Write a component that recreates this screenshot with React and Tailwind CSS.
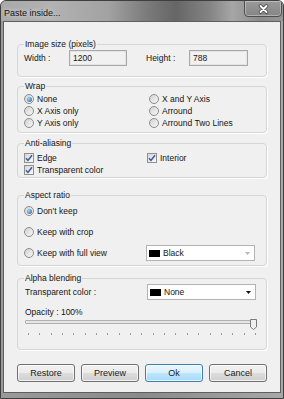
import React from "react";

const font = "font-['Liberation_Sans',Arial,sans-serif]";

function Radio({ label, checked }) {
  return (
    <div className="flex items-center h-[12px]">
      <span className="w-[10px] h-[10px] rounded-full border border-[#8d8d8d] bg-[linear-gradient(135deg,#d2d2d2,#f7f7f7)] flex items-center justify-center shrink-0">
        {checked && (
          <span className="w-[5px] h-[5px] rounded-full bg-[radial-gradient(circle_at_35%_35%,#9fd3f7,#1e5d98)]"></span>
        )}
      </span>
      <span className="ml-[3px] whitespace-nowrap">{label}</span>
    </div>
  );
}

function Check({ label, checked }) {
  return (
    <div className="flex items-center h-[12px]">
      <span className="w-[10px] h-[10px] border border-[#8e8f8f] bg-[linear-gradient(135deg,#d6d6d6,#fafafa)] flex items-center justify-center shrink-0">
        {checked && (
          <svg width="8" height="8" viewBox="0 0 8 8">
            <path d="M1 4.2 L3 6.4 L7 1.2" fill="none" stroke="#3d5a9a" strokeWidth="1.5" />
          </svg>
        )}
      </span>
      <span className="ml-[3px] whitespace-nowrap">{label}</span>
    </div>
  );
}

function Group({ title, className, children }) {
  return (
    <fieldset className={`border border-[#d6d6d6] rounded-[4px] pl-[6px] pr-[6px] shadow-[1px_1px_0_#fff] ${className}`}>
      <legend className="px-[1px] leading-[12px]">{title}</legend>
      {children}
    </fieldset>
  );
}

function Combo({ label, arrow }) {
  return (
    <div className="w-[109px] h-[16px] border border-[#b3b3b3] bg-white flex items-center pl-[2px] pr-[4px]">
      <span className="w-[11px] h-[7px] bg-black"></span>
      <span className="ml-[3px] flex-1">{label}</span>
      <svg width="5" height="3" viewBox="0 0 5 3">
        <path d="M0 0 H5 L2.5 3 Z" fill={arrow} />
      </svg>
    </div>
  );
}

function Field({ value, width }) {
  return (
    <div className={`${width} h-[16px] border border-[#a8a8a8] bg-[#f1f1f1] shadow-[inset_0_0_0_1px_#e4e4e4] flex items-center pl-[3px]`}>
      {value}
    </div>
  );
}

function Btn({ label, primary }) {
  return (
    <button
      className={`w-[58px] h-[18px] rounded-[3px] border text-[9px] leading-none text-[#1a1a1a] shadow-[inset_0_0_0_1px_rgba(255,255,255,0.7)] ${
        primary
          ? "border-[#3c7fb1] bg-[linear-gradient(#eaf6fd_0%,#d9f0fc_50%,#bee6fd_51%,#a7d9f5_100%)]"
          : "border-[#707070] bg-[linear-gradient(#f2f2f2_0%,#ebebeb_50%,#dddddd_51%,#cfcfcf_100%)]"
      }`}
    >
      {label}
    </button>
  );
}

export default function App() {
  const ticks = Array.from({ length: 21 });
  return (
    <div className={`${font} w-[284px] h-[399px] flex flex-col border border-[#3f3f3f] rounded-t-[6px] bg-[#8c8c8c] text-[8.5px] text-[#141414] overflow-hidden`}>
      {/* title bar */}
      <div className="h-[20px] flex items-start justify-between bg-[linear-gradient(90deg,#a9a9a9_0%,#b2b2b2_18%,#a2a2a2_38%,#7a7a7a_52%,#666666_62%,#848484_74%,#a6a6a6_82%,#8a8a8a_92%,#959595_100%)]">
        <span className="mt-[6px] ml-[3px] text-[9px] leading-[12px] text-[#111] [text-shadow:0_0_5px_rgba(255,255,255,0.9)]">
          Paste inside...
        </span>
        <div className="w-[38px] h-[17px] -mt-px mr-px border border-[#4e4e4e] rounded-b-[4px] shadow-[inset_0_0_0_1px_rgba(255,255,255,0.35)] bg-[linear-gradient(#9a9a9a,#858585)] flex items-center justify-center">
          <svg width="11" height="10" viewBox="0 0 11 10">
            <path d="M2.5 2 L8.5 8 M8.5 2 L2.5 8" stroke="#3a3a3a" strokeWidth="3.4" strokeLinecap="round" />
            <path d="M2.5 2 L8.5 8 M8.5 2 L2.5 8" stroke="#ffffff" strokeWidth="2" strokeLinecap="round" />
          </svg>
        </div>
      </div>

      {/* frame + client */}
      <div className="flex-1 flex px-[2px] pb-[5px] bg-[linear-gradient(90deg,#9a9a9a,#8a8a8a_50%,#a8a8a8)]">
        <div className="flex-1 flex flex-col border border-[#5f5f5f] bg-[#f0f0f0] px-[13px] pt-[16px]">
          <Group title="Image size (pixels)" className="pb-[10px]">
            <div className="flex items-center h-[16px]">
              <span className="w-[45px]">Width :</span>
              <Field value="1200" width="w-[58px]" />
              <span className="ml-[19px] w-[43px]">Height :</span>
              <Field value="788" width="w-[59px]" />
            </div>
          </Group>

          <Group title="Wrap" className="mt-[3px] pt-[1px] pb-[3px]">
            <div className="grid grid-cols-[125px_1fr]">
              <Radio label="None" checked />
              <Radio label="X and Y Axis" />
              <Radio label="X Axis only" />
              <Radio label="Arround" />
              <Radio label="Y Axis only" />
              <Radio label="Arround Two Lines" />
            </div>
          </Group>

          <Group title="Anti-aliasing" className="mt-[4px] pt-[3px] pb-[1px]">
            <div className="grid grid-cols-[123px_1fr]">
              <Check label="Edge" checked />
              <Check label="Interior" checked />
              <Check label="Transparent color" checked />
            </div>
          </Group>

          <Group title="Aspect ratio" className="mt-[11px] pt-[2px] pb-[4px]">
            <div className="flex flex-col gap-[5px]">
              <div className="h-[16px] flex items-center">
                <Radio label="Don't keep" checked />
              </div>
              <div className="h-[16px] flex items-center">
                <Radio label="Keep with crop" />
              </div>
              <div className="h-[16px] flex items-center">
                <div className="w-[122px]">
                  <Radio label="Keep with full view" />
                </div>
                <Combo label="Black" arrow="#b8b8b8" />
              </div>
            </div>
          </Group>

          <Group title="Alpha blending" className="mt-[6px] pb-[14px]">
            <div className="h-[16px] flex items-center">
              <span className="w-[122px] ml-px">Transparent color :</span>
              <Combo label="None" arrow="#111" />
            </div>
            <div className="mt-[6px] h-[12px] flex items-center ml-px">Opacity : 100%</div>
            <div className="relative h-[12px] ml-px w-[232px]">
              <div className="mt-[2px] h-[4px] w-[231px] border border-[#b0b0b0] bg-[#e4e7e8] rounded-[1px]"></div>
              <svg className="absolute left-[225px] -top-px" width="7" height="11" viewBox="0 0 7 11">
                <path d="M0.5 0.5 H6.5 V8 L3.5 10.5 L0.5 8 Z" fill="#f0f0f0" stroke="#7a7a7a" />
              </svg>
            </div>
            <div className="mt-px ml-[4px] w-[228px] h-[2px] flex justify-between">
              {ticks.map((_, i) => (
                <span key={i} className="w-px h-[2px] bg-[#9a9a9a]"></span>
              ))}
            </div>
          </Group>

          <div className="mt-[14px] flex justify-between">
            <Btn label="Restore" />
            <Btn label="Preview" />
            <Btn label="Ok" primary />
            <Btn label="Cancel" />
          </div>
        </div>
      </div>
    </div>
  );
}
